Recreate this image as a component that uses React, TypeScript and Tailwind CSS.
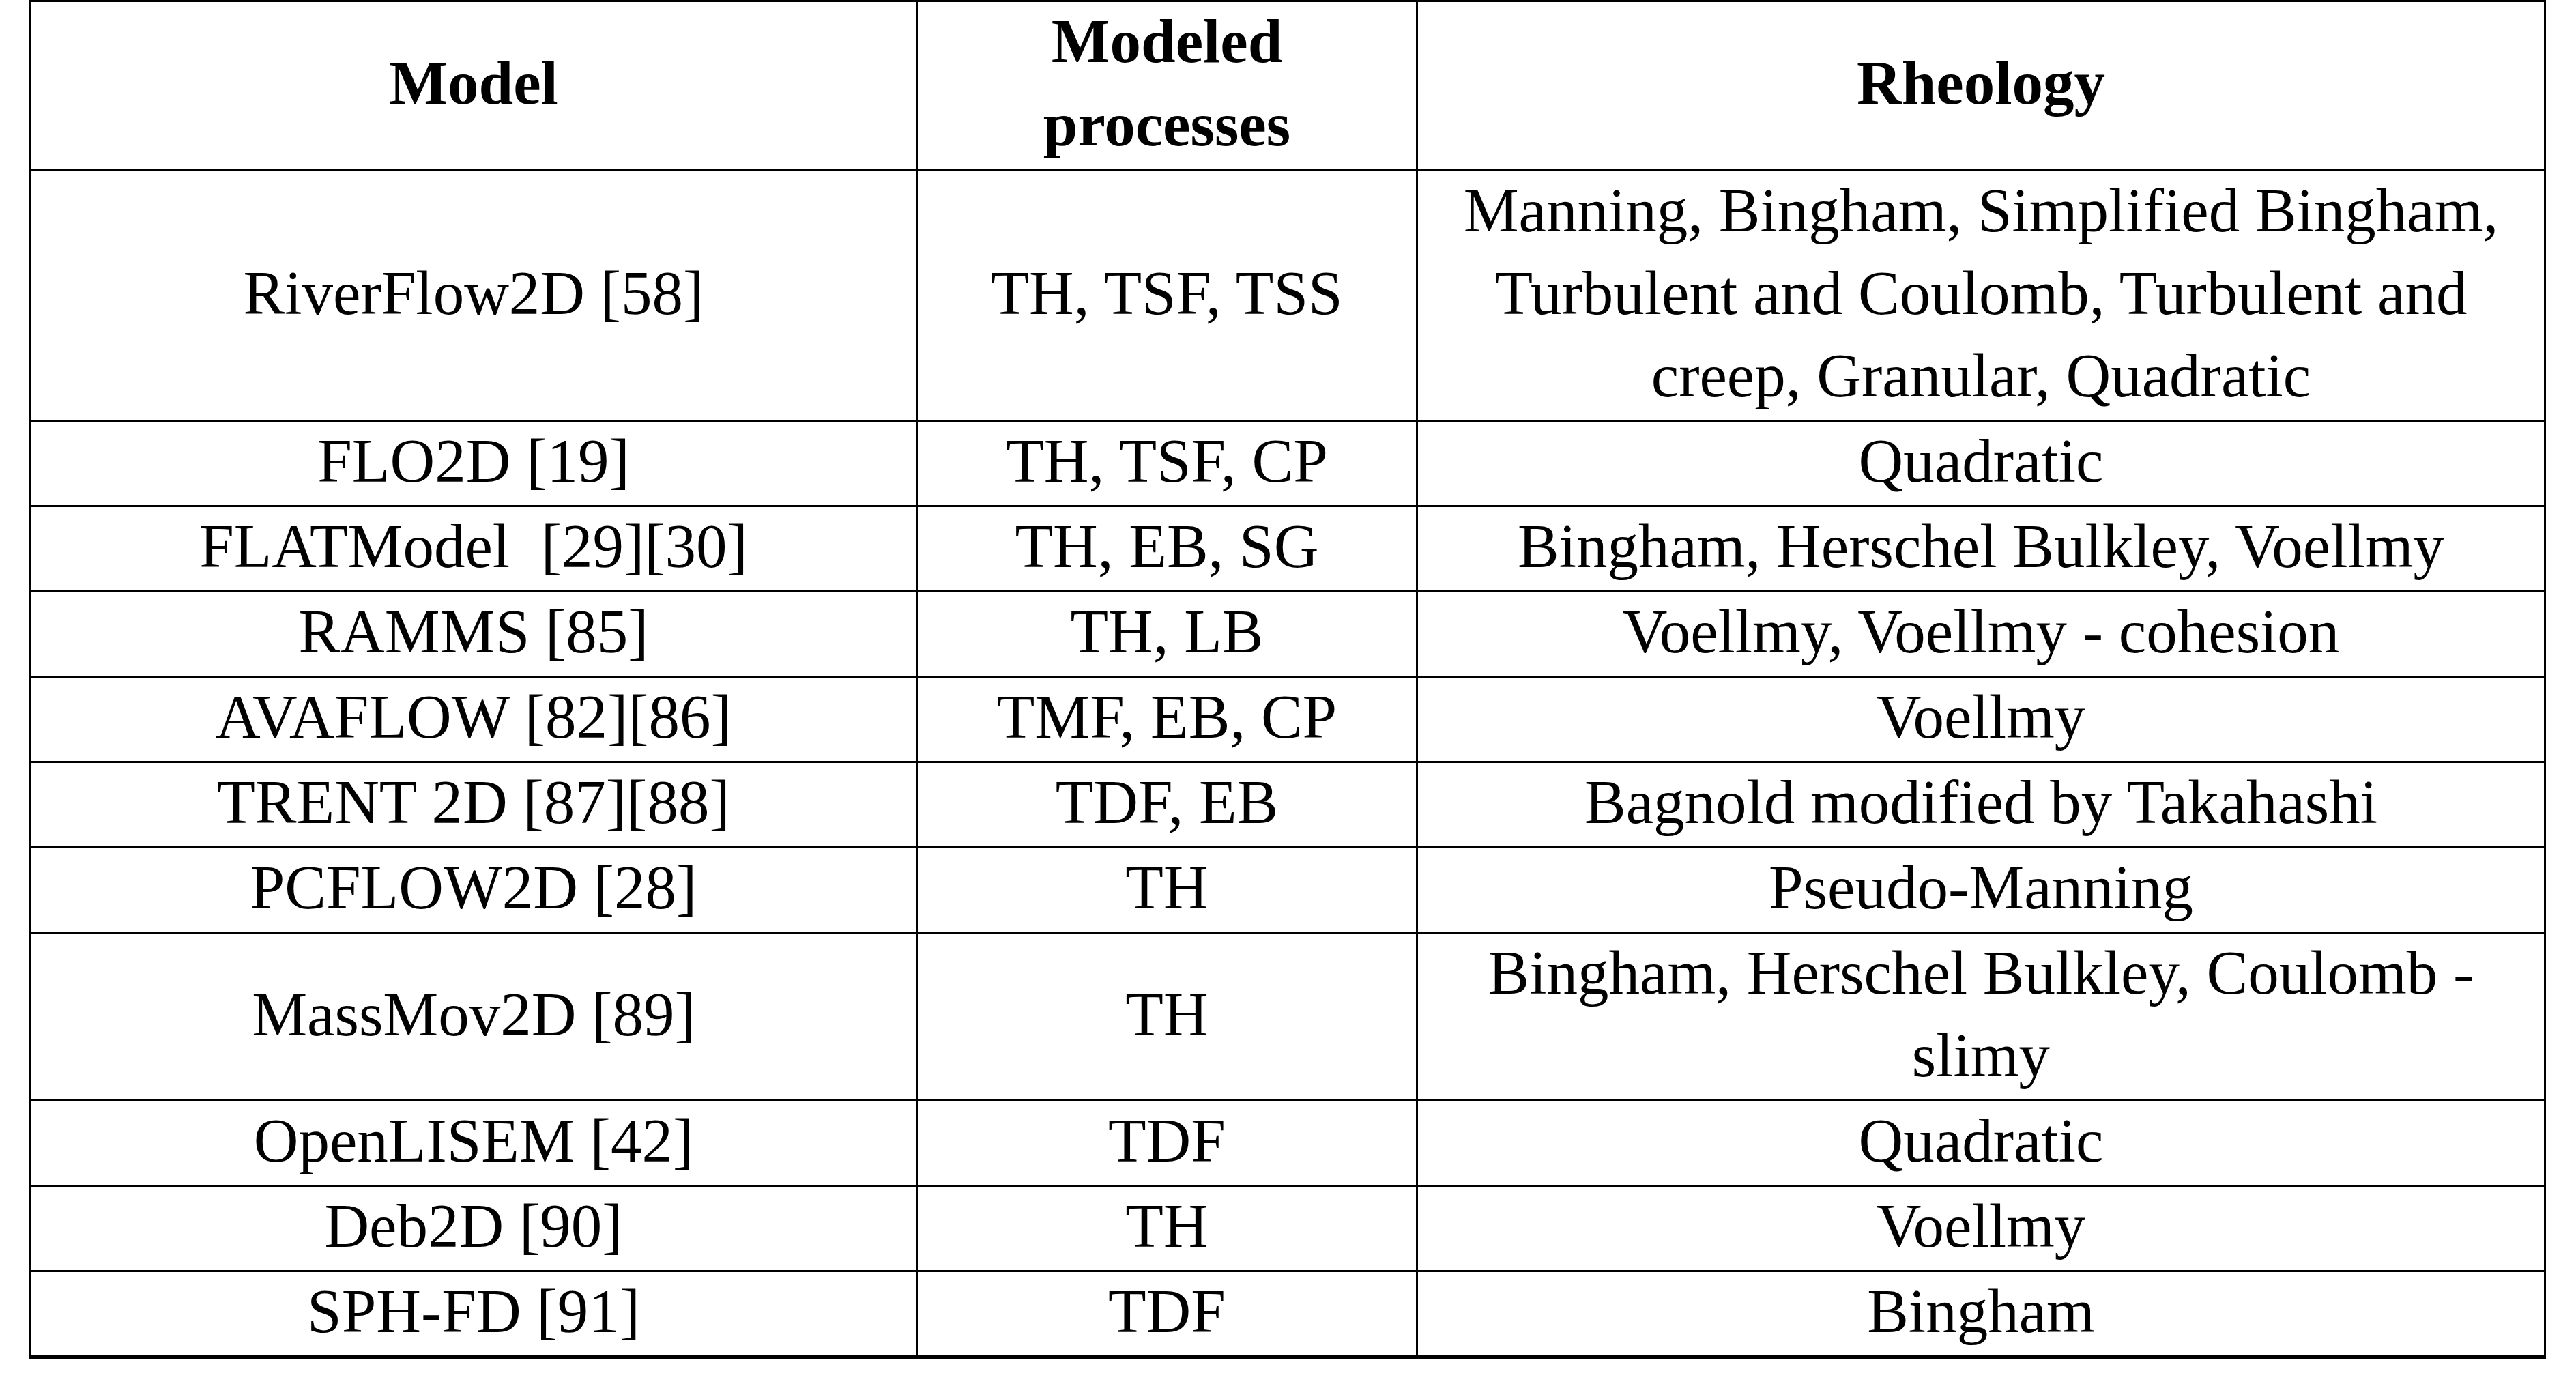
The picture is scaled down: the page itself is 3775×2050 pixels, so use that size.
const rows: { model: string; processes: string; rheology: string[] }[] = [
  {
    model: 'RiverFlow2D [58]',
    processes: 'TH, TSF, TSS',
    rheology: [
      'Manning, Bingham, Simplified Bingham,',
      'Turbulent and Coulomb, Turbulent and',
      'creep, Granular, Quadratic',
    ],
  },
  { model: 'FLO2D [19]', processes: 'TH, TSF, CP', rheology: ['Quadratic'] },
  { model: 'FLATModel\u00a0 [29][30]', processes: 'TH, EB, SG', rheology: ['Bingham, Herschel Bulkley, Voellmy'] },
  { model: 'RAMMS [85]', processes: 'TH, LB', rheology: ['Voellmy, Voellmy - cohesion'] },
  { model: 'AVAFLOW [82][86]', processes: 'TMF, EB, CP', rheology: ['Voellmy'] },
  { model: 'TRENT 2D [87][88]', processes: 'TDF, EB', rheology: ['Bagnold modified by Takahashi'] },
  { model: 'PCFLOW2D [28]', processes: 'TH', rheology: ['Pseudo-Manning'] },
  {
    model: 'MassMov2D [89]',
    processes: 'TH',
    rheology: ['Bingham, Herschel Bulkley, Coulomb -', 'slimy'],
  },
  { model: 'OpenLISEM [42]', processes: 'TDF', rheology: ['Quadratic'] },
  { model: 'Deb2D [90]', processes: 'TH', rheology: ['Voellmy'] },
  { model: 'SPH-FD [91]', processes: 'TDF', rheology: ['Bingham'] },
];

const App = () => {
  return (
    <div className="w-[3775px] h-[2050px] bg-white font-['Liberation_Serif',serif] text-black">
      <table className="ml-[43px] w-[3685px] table-fixed border-collapse border-[3px] border-black text-[91px]">
        <colgroup>
          <col className="w-[1299px]" />
          <col className="w-[733px]" />
          <col className="w-[1653px]" />
        </colgroup>
        <thead>
          <tr className="font-bold leading-[122px]">
            <th className="border-[3px] border-black pt-[1px] text-center align-middle">
              <div className="-translate-y-[4px]">Model</div>
            </th>
            <th className="border-[3px] border-black pt-[1px] text-center align-middle">
              <div className="-translate-y-[4px]">
                Modeled
                <br />
                processes
              </div>
            </th>
            <th className="border-[3px] border-black pt-[1px] text-center align-middle">
              <div className="-translate-y-[4px]">Rheology</div>
            </th>
          </tr>
        </thead>
        <tbody>
          {rows.map((row, i) => {
            const last = i === rows.length - 1;
            const cell = last
              ? 'border-[3px] border-b-[5px] border-black pt-[1px] text-center align-middle whitespace-pre'
              : 'border-[3px] border-black pt-[1px] text-center align-middle whitespace-pre';
            return (
              <tr key={`row-${i}`} className="leading-[121px]">
                <td className={cell}>
                  <div className="-translate-y-[4px]">{row.model}</div>
                </td>
                <td className={cell}>
                  <div className="-translate-y-[4px]">{row.processes}</div>
                </td>
                <td className={cell}>
                  <div className="-translate-y-[4px]">
                    {row.rheology.map((line, j) => (
                      <div key={`line-${i}-${j}`}>{line}</div>
                    ))}
                  </div>
                </td>
              </tr>
            );
          })}
        </tbody>
      </table>
    </div>
  );
};

export default App;
